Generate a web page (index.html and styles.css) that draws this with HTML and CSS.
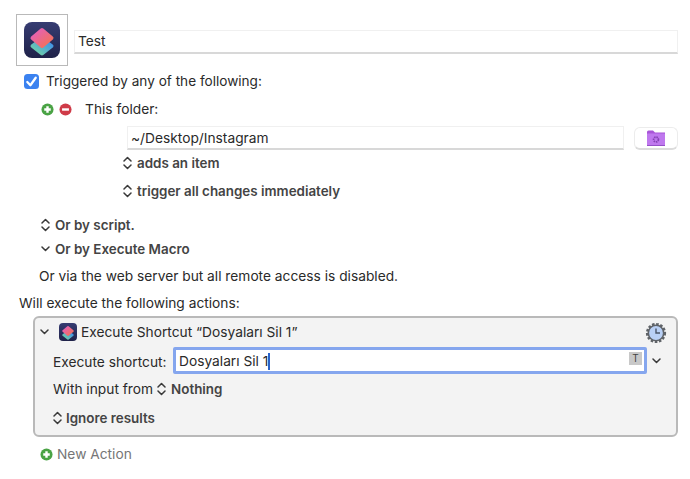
FILE: index.html
```html
<!DOCTYPE html>
<html lang="tr">
<head>
<meta charset="utf-8">
<title>Test</title>
<link rel="stylesheet" href="styles.css">
</head>
<body>
<svg class="defs" width="0" height="0" aria-hidden="true">
  <defs>
    <linearGradient id="bg" x1="0" y1="0" x2="0" y2="1"><stop offset="0" stop-color="#363c72"/><stop offset="1" stop-color="#1f2249"/></linearGradient>
    <linearGradient id="top" x1="0" y1="0" x2="1" y2="1"><stop offset="0" stop-color="#e45fc0"/><stop offset="1" stop-color="#f4724f"/></linearGradient>
    <linearGradient id="bot" x1="0" y1="1" x2="1" y2="0"><stop offset="0" stop-color="#74d8a0"/><stop offset="1" stop-color="#3a86f2"/></linearGradient>
    <symbol id="shortcuts" viewBox="0 0 36 36">
      <rect width="36" height="36" rx="8" fill="url(#bg)"/>
      <path d="M18 17 L27.500 24 L18 31.500 L8.500 24 Z" fill="url(#bot)" stroke="url(#bot)" stroke-width="4" stroke-linejoin="round"/>
      <path d="M18 8 L27.500 16 L18 24 L8.500 16 Z" fill="url(#top)" stroke="url(#top)" stroke-width="4" stroke-linejoin="round"/>
    </symbol>
    <symbol id="updown" viewBox="0 0 9 14">
      <path d="M1 5 L4.500 1.500 L8 5 M1 9 L4.500 12.500 L8 9" fill="none" stroke="currentColor" stroke-width="1.500" stroke-linecap="round" stroke-linejoin="round"/>
    </symbol>
    <symbol id="down" viewBox="0 0 9 6">
      <path d="M1 1 L4.500 4.500 L8 1" fill="none" stroke="currentColor" stroke-width="1.500" stroke-linecap="round" stroke-linejoin="round"/>
    </symbol>
    <symbol id="plus" viewBox="0 0 14 14">
      <circle cx="7" cy="7" r="6.500" fill="#4aa345"/>
      <path d="M7 3.500 V10.500 M3.500 7 H10.500" stroke="#fff" stroke-width="2.600"/>
    </symbol>
    <symbol id="minus" viewBox="0 0 14 14">
      <circle cx="7" cy="7" r="6.500" fill="#cf3b48"/>
      <path d="M3.300 7 H10.700" stroke="#fff" stroke-width="2.600"/>
    </symbol>
  </defs>
</svg>
<main class="page">
  <header class="title-row">
    <div class="icon-well"><svg class="app-icon"><use href="#shortcuts"/></svg></div>
    <div class="field name-field">Test</div>
  </header>

  <label class="trigger-head">
    <span class="checkbox"><svg viewBox="0 0 16 16" width="15" height="15"><path d="M3.500 8.500 L6.800 12 L12.500 4" fill="none" stroke="#fff" stroke-width="2.400" stroke-linecap="round" stroke-linejoin="round"/></svg></span>
    <span>Triggered by any of the following:</span>
  </label>

  <section class="folder-trigger">
    <div class="folder-head">
      <svg class="round"><use href="#plus"/></svg>
      <svg class="round"><use href="#minus"/></svg>
      <span class="folder-label">This folder:</span>
    </div>
    <div class="path-row">
      <div class="field path-field">~/Desktop/Instagram</div>
      <button class="folder-btn" type="button">
        <svg viewBox="0 0 18 16" width="18" height="16">
          <path d="M0 2 Q0 0.500 1.500 0.500 H6 L8 2.500 H18 V16 H0 Z" fill="#a855d8"/>
          <rect y="3.500" width="18" height="12.500" rx="0.500" fill="#bf78ee"/>
          <circle cx="9" cy="9.500" r="2.400" fill="none" stroke="#8542b5" stroke-width="1.800" stroke-dasharray="1.400 0.700"/>
          <rect y="15" width="18" height="1" fill="#9550c8"/>
        </svg>
      </button>
    </div>
    <div class="popup adds"><svg class="updown"><use href="#updown"/></svg><b>adds an item</b></div>
    <div class="popup changes"><svg class="updown"><use href="#updown"/></svg><b>trigger all changes immediately</b></div>
  </section>

  <div class="popup by-script"><svg class="updown"><use href="#updown"/></svg><b>Or by script.</b></div>
  <div class="popup by-macro"><svg class="down"><use href="#down"/></svg><b>Or by Execute Macro</b></div>
  <p class="via">Or via the web server but all remote access is disabled.</p>
  <p class="will">Will execute the following actions:</p>

  <section class="action">
    <div class="action-head">
      <svg class="down action-toggle"><use href="#down"/></svg>
      <svg class="mini-icon"><use href="#shortcuts"/></svg>
      <span>Execute Shortcut “Dosyaları Sil 1”</span>
      <svg class="gear" viewBox="0 0 22 22" width="22" height="22">
        <circle cx="11" cy="11" r="8.300" fill="none" stroke="#5f6368" stroke-width="3.600" stroke-dasharray="2.400 1.500"/>
        <circle cx="11" cy="11" r="7.700" fill="#b9d0f5" stroke="#5f6368" stroke-width="1.600"/>
        <path d="M11 6.500 V11 H15" fill="none" stroke="#4a5568" stroke-width="1.400"/>
      </svg>
    </div>
    <div class="shortcut-row">
      <span class="shortcut-label">Execute shortcut:</span>
      <div class="focus-field"><span class="typed">Dosyaları Sil 1</span><span class="caret"></span><span class="t-badge">T</span></div>
      <svg class="down field-menu"><use href="#down"/></svg>
    </div>
    <div class="input-row">
      <span>With input from</span>
      <svg class="updown"><use href="#updown"/></svg>
      <b>Nothing</b>
    </div>
    <div class="popup results"><svg class="updown"><use href="#updown"/></svg><b>Ignore results</b></div>
  </section>

  <div class="new-action"><svg class="round"><use href="#plus"/></svg><span>New Action</span></div>
</main>
</body>
</html>
```

FILE: styles.css
```css
* { box-sizing: border-box; }
html, body { margin: 0; padding: 0; background: #fff; }
body {
  width: 690px;
  height: 479px;
  overflow: hidden;
  font-family: Inter, "Liberation Sans", sans-serif;
  font-size: 13.75px;
  color: #2a2a2a;
}
.defs { position: absolute; }
.page { padding: 14px 12px 0 16px; }
b { font-weight: 600; color: #444; font-size: 13.4px; }
p { margin: 0; }

.title-row { display: flex; align-items: center; gap: 6px; height: 52px; }
.icon-well {
  width: 52px; height: 52px; border: 1px solid #b9b9b9;
  display: flex; align-items: center; justify-content: center;
}
.app-icon { width: 36px; height: 36px; display: block; }
.field {
  background: #fff;
  border: 1px solid #f0f0f0;
  border-bottom: 2px solid #d8d8d8;
  height: 24px;
  display: flex; align-items: center;
}
.name-field { flex: 1; padding-left: 3px; margin-top: 3px; }

.trigger-head { display: flex; align-items: center; gap: 7px; margin: 7px 0 0 8px; height: 16px; font-size: 13.6px; }
.checkbox {
  width: 15px; height: 15px; border-radius: 3.500px; background: #3b82f0;
  display: block; flex: none;
}
.checkbox svg { display: block; }

.folder-trigger { padding-left: 25px; }
.folder-head { display: flex; align-items: center; gap: 5px; height: 16px; margin-top: 12px; }
.round { width: 13px; height: 13px; display: block; flex: none; }
.folder-label { margin-left: 8px; }

.path-row { display: flex; align-items: center; margin: 9px 0 0 86px; gap: 10px; }
.path-field { width: 497px; padding-left: 3px; }
.folder-btn {
  width: 44px; height: 23px; padding: 0;
  background: #fff; border: 1px solid #ececec; border-bottom: 2px solid #dcdcdc; border-radius: 6px;
  display: flex; align-items: center; justify-content: center;
}

.popup { display: flex; align-items: center; gap: 5px; height: 16px; }
.updown { width: 9px; height: 14px; display: block; flex: none; color: #3a3a3a; }
.down { width: 9px; height: 6px; display: block; flex: none; color: #3a3a3a; }
.adds { margin: 5px 0 0 82px; }
.changes { margin: 12px 0 0 82px; }
.by-script { margin: 18px 0 0 25px; }
.by-macro { margin: 8px 0 0 25px; }
.via { margin: 11px 0 0 23px; height: 17px; line-height: 17px; }
.will { margin: 10px 0 0 3px; height: 17px; line-height: 17px; }

.action {
  margin: 4px 0 0 17px;
  height: 121px;
  background: #f3f3f3;
  border: 2px solid #b9b9b9;
  border-radius: 6px;
  padding: 4px 0 0 5px;
}
.action-head { display: flex; align-items: center; height: 20px; position: relative; }
.action-toggle { margin-right: 10px; }
.mini-icon { width: 18px; height: 18px; display: block; margin-right: 4px; }
.gear { position: absolute; right: 9px; top: 0; }
.shortcut-row { display: flex; align-items: center; margin: 5px 0 0 13px; }
.shortcut-label { width: 120px; flex: none; padding-top: 2px; }
.focus-field {
  width: 474px; height: 27px; background: #fff; flex: none;
  border: 3px solid #85a6ee; border-radius: 2px;
  display: flex; align-items: center; padding: 1px 0 0 3px; position: relative;
}
.caret { width: 1.500px; height: 17px; background: #2a62c8; }
.t-badge {
  position: absolute; right: 2px; top: 2px;
  width: 13px; height: 13px; background: #c8c8c8; color: #444;
  font-size: 10px; line-height: 13px; text-align: center;
}
.field-menu { margin-left: 5px; }
.input-row { display: flex; align-items: center; gap: 3px; height: 17px; margin: 6px 0 0 13px; }
.input-row .updown { margin-left: 1px; }
.input-row b { margin-left: 2px; }
.results { margin: 13px 0 0 13px; gap: 4px; }

.new-action {
  display: flex; align-items: center; gap: 4px; height: 16px;
  margin: 9px 0 0 24px; color: #767676;
}
```
